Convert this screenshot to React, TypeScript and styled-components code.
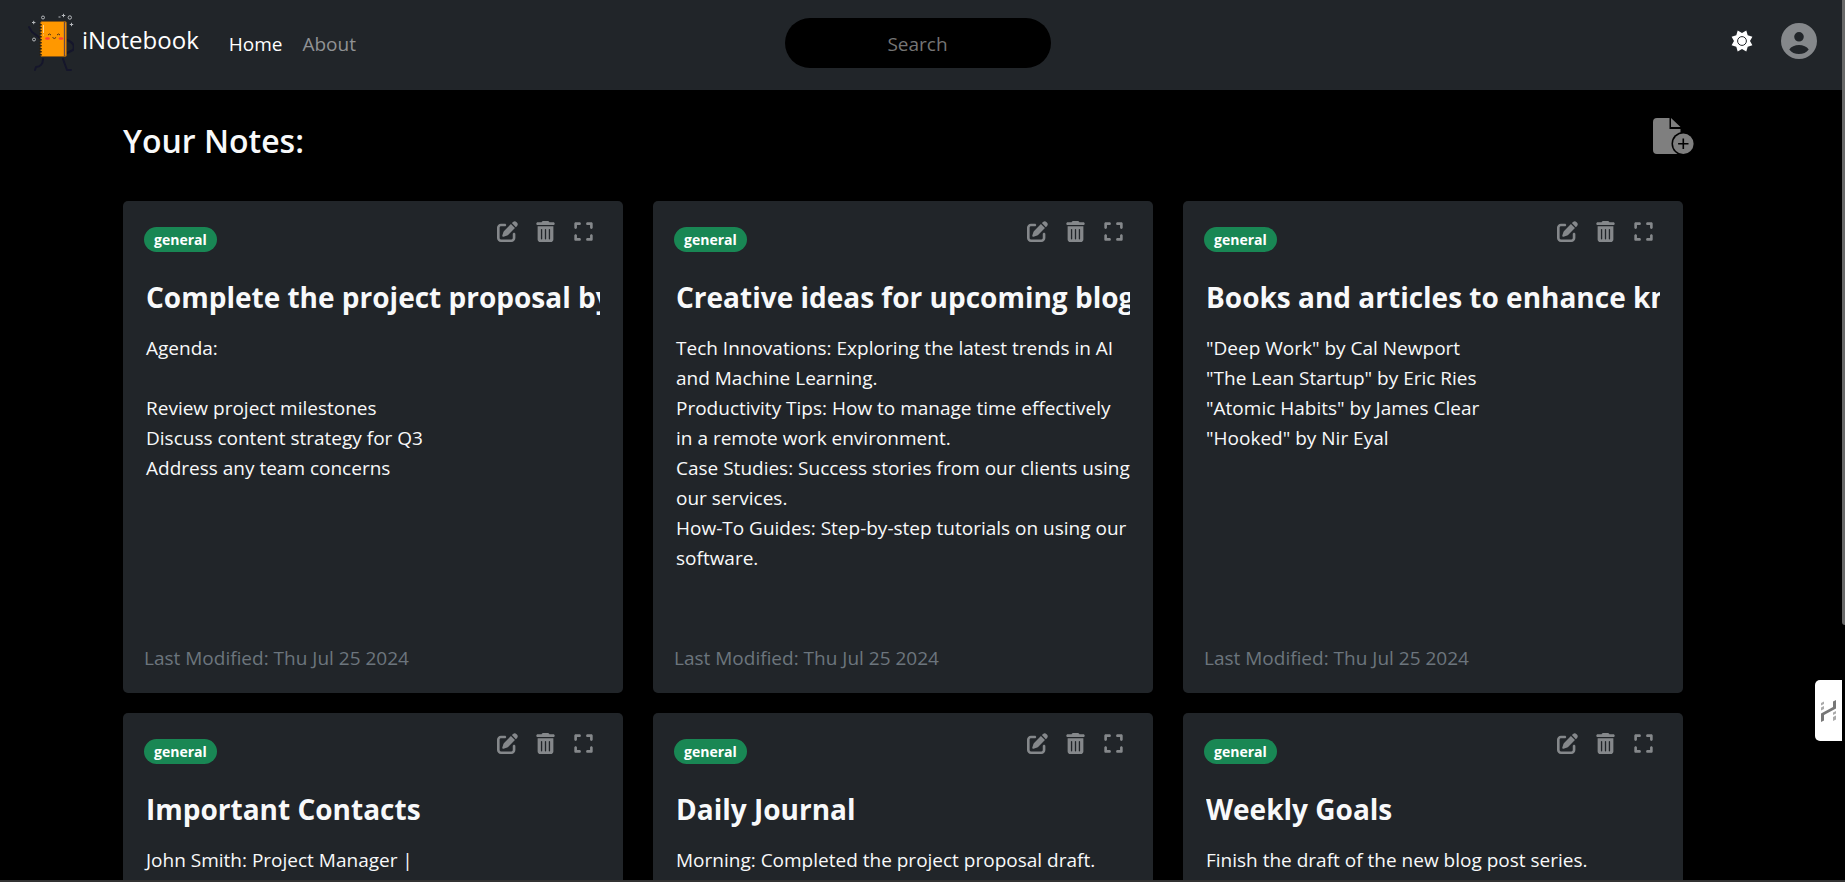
import React from "react";
import styled, { createGlobalStyle } from "styled-components";
import { FaPenToSquare, FaTrashCan, FaExpand } from "react-icons/fa6";

const colors = {
  page: "#000000",
  surface: "#212529",
  text: "#f8f9fa",
  muted: "#6c757d",
  icon: "#85888b",
  badge: "#198754",
};

const GlobalStyle = createGlobalStyle`
  *, *::before, *::after { box-sizing: border-box; }
  body {
    margin: 0;
    background: ${colors.page};
    color: ${colors.text};
    font-family: "Segoe UI", "Open Sans", "Noto Sans", sans-serif;
    font-size: 19px;
    line-height: 30px;
  }
  h1, h2, p { margin: 0; }
  button { border: 0; padding: 0; background: none; color: inherit; font: inherit; cursor: pointer; }
`;

const Window = styled.div`
  height: 100vh;
  display: grid;
  grid-template: minmax(0, 1fr) 2px / minmax(0, 1fr) 3px;
  overflow: hidden;
`;

const Page = styled.div`
  overflow: hidden;
`;

const ScrollTrack = styled.div`
  background: ${colors.page};
`;

const ScrollThumb = styled.div`
  height: 71%;
  background: #686868;
  border-radius: 0 0 0 3px;
`;

const BottomEdge = styled.div`
  grid-column: 1 / -1;
  background: #333333;
`;

const Navbar = styled.header`
  display: grid;
  grid-template-columns: 1fr 266px 1fr;
  align-items: center;
  height: 90px;
  padding: 0 25px 0 18px;
  background: ${colors.surface};
`;

const NavStart = styled.div`
  display: flex;
  align-items: center;
  padding-left: 8px;
`;

const Brand = styled.a`
  display: flex;
  align-items: center;
  gap: 8px;
  margin-right: 30px;
  padding-bottom: 6px;
  color: #ffffff;
  font-size: 24px;
  text-decoration: none;
`;

const BrandName = styled.span`
  padding-bottom: 4px;
`;

const NavLinks = styled.nav`
  display: flex;
  gap: 20px;
  padding-bottom: 2px;
`;

const NavLink = styled.a<{ $active?: boolean }>`
  color: ${(p) => (p.$active ? "#ffffff" : "#909294")};
  text-decoration: none;
`;

const SearchInput = styled.input`
  width: 100%;
  height: 50px;
  margin-bottom: 4px;
  padding: 2px 20px 0;
  border: 0;
  border-radius: 25px;
  background: #000000;
  color: ${colors.text};
  font: inherit;
  text-align: center;
  &::placeholder { color: #757575; opacity: 1; }
`;

const NavEnd = styled.div`
  display: flex;
  justify-content: flex-end;
  align-items: center;
  gap: 28px;
  padding-bottom: 8px;
`;

const IconButton = styled.button<{ $color?: string }>`
  display: flex;
  color: ${(p) => p.$color ?? colors.icon};
`;

const Main = styled.main`
  padding: 28px 159px 0 123px;
`;

const Heading = styled.div`
  display: flex;
  justify-content: space-between;
  align-items: flex-start;
  height: 83px;
  margin-right: -12px;
`;

const PageTitle = styled.h1`
  font-size: 32px;
  line-height: 46px;
  font-weight: 600;
`;

const NoteGrid = styled.section`
  display: grid;
  grid-template-columns: repeat(3, minmax(0, 1fr));
  gap: 20px 30px;
`;

const Card = styled.article`
  display: flex;
  flex-direction: column;
  height: 492px;
  padding: 20px 21px;
  border-radius: 5px;
  background: ${colors.surface};
`;

const CardTop = styled.div`
  display: flex;
  justify-content: space-between;
  align-items: flex-start;
`;

const Badge = styled.span`
  margin-top: 6px;
  padding: 0 10px;
  border-radius: 13px;
  background: ${colors.badge};
  color: #ffffff;
  font-size: 14px;
  line-height: 25px;
  font-weight: 700;
`;

const Actions = styled.div`
  display: flex;
  gap: 17px;
  padding-right: 8px;
`;

const CardBody = styled.div`
  flex: 1;
  padding: 26px 2px 0;
`;

const NoteTitle = styled.h2`
  overflow: hidden;
  white-space: nowrap;
  font-size: 28px;
  line-height: 38px;
  font-weight: 700;
`;

const NoteText = styled.p`
  margin-top: 17px;
  white-space: pre-line;
`;

const Modified = styled.footer`
  color: ${colors.muted};
`;

const SideTab = styled.button`
  position: fixed;
  right: 3px;
  top: 680px;
  display: flex;
  align-items: center;
  justify-content: center;
  width: 27px;
  height: 61px;
  border-radius: 5px 0 0 5px;
  background: #ffffff;
`;

const NotebookLogo = () => (
  <svg width="48" height="60" viewBox="0 0 48 60" fill="none" aria-hidden="true">
    <g stroke="#15162b" strokeWidth="2" strokeLinecap="round" strokeLinejoin="round">
      <path d="M3 15l3 5 8 6M41 28c6 2 8 6 6 10l-6 3M17 47c0 5-3 8-7 8l-1 3M37 47l4 11h4" />
    </g>
    <rect x="14.500" y="9.500" width="26" height="35" rx="1.500" fill="#ff9800" stroke="#8a5713" />
    <path d="M38.500 10v34" stroke="#664a48" strokeWidth="1.300" />
    <path d="M14.500 12v32" stroke="#2b2110" strokeWidth="2.500" strokeDasharray="1.500 1.500" />
    <path d="M17.500 13v8M17.500 22.500v1" stroke="#ffd28a" />
    <path d="M22 23q1.500-2 3 0M31 23q1.500-2 3 0M26.500 25.500q1.800 2 3.600 0" stroke="#49311c" />
    <ellipse cx="21.500" cy="26.500" rx="2.400" ry="1.300" fill="#ff4136" />
    <ellipse cx="35" cy="26.500" rx="2.400" ry="1.300" fill="#ff4136" />
    <g stroke="#b5b8bc">
      <circle cx="17" cy="5.500" r="1.500" />
      <circle cx="43.800" cy="5.500" r="1.700" />
      <circle cx="8" cy="27.500" r="1.500" />
      <path d="M6 10.500h3.400M7.700 8.800v3.400M43.800 12.500h3.400M45.500 10.800v3.400M35.800 3.500h3.400M37.500 1.800v3.400M32.500 5h2" />
    </g>
  </svg>
);

const SunIcon = () => (
  <svg width="22" height="22" viewBox="-11 -11 22 22" aria-hidden="true">
    <path fill="currentColor" d="M10.400 4.300L5.700 5.700 4.300 10.400 0 8-4.300 10.400-5.700 5.700-10.400 4.300-8 0-10.400-4.300-5.700-5.700-4.300-10.400 0-8 4.300-10.400 5.700-5.700 10.400-4.300 8 0z" />
    <circle r="4.400" fill="none" stroke={colors.surface} />
  </svg>
);

const AccountIcon = () => (
  <svg width="36" height="36" viewBox="0 0 36 36" aria-hidden="true">
    <path fill="currentColor" fillRule="evenodd" d="M18 0a18 18 0 100 36 18 18 0 000-36zm0 9a4.800 4.800 0 110 9.600A4.800 4.800 0 0118 9zm-9.700 17.500C10 23.500 14 22 18 22s8 1.500 9.700 4.500C25.500 29.500 22 31 18 31s-7.500-1.500-9.700-4.500z" />
  </svg>
);

const AddNoteIcon = () => (
  <svg width="42" height="36" viewBox="0 0 42 36" aria-hidden="true">
    <path fill="currentColor" d="M4 0h12.500v11H27.500V36H4a4 4 0 01-4-4V4a4 4 0 014-4zM18 0l9.500 9H18z" />
    <circle cx="30.300" cy="25.700" r="11.800" fill={colors.page} />
    <circle cx="30.300" cy="25.700" r="10.300" fill="currentColor" />
    <path d="M30.300 20.500v10.400M25.100 25.700h10.400" stroke={colors.page} strokeWidth="1.600" />
  </svg>
);

const TabLogo = () => (
  <svg width="15" height="22" viewBox="0 0 15 22" aria-hidden="true">
    <path fill="#777777" d="M0 22v-8.500L12 7V1.500L15 0v8.500L3 15v5.500z" />
    <path fill="#aaaaaa" d="M0 3l3-1.500V4L0 5.500zM0 7.500L3 6v3L0 10.500zM12 12.500l3-1.500v2.500L12 15zM12 17l3-1.500v4L12 21z" />
  </svg>
);

const notes = [
  { title: "Complete the project proposal by Friday", text: "Agenda:\n\nReview project milestones\nDiscuss content strategy for Q3\nAddress any team concerns" },
  { title: "Creative ideas for upcoming blog posts", text: "Tech Innovations: Exploring the latest trends in AI and Machine Learning.\nProductivity Tips: How to manage time effectively in a remote work environment.\nCase Studies: Success stories from our clients using our services.\nHow-To Guides: Step-by-step tutorials on using our software." },
  { title: "Books and articles to enhance knowledge", text: "\"Deep Work\" by Cal Newport\n\"The Lean Startup\" by Eric Ries\n\"Atomic Habits\" by James Clear\n\"Hooked\" by Nir Eyal" },
  { title: "Important Contacts", text: "John Smith: Project Manager |" },
  { title: "Daily Journal", text: "Morning: Completed the project proposal draft." },
  { title: "Weekly Goals", text: "Finish the draft of the new blog post series." },
];

export default function App() {
  return (
    <Window>
      <GlobalStyle />
      <Page>
        <Navbar>
          <NavStart>
            <Brand href="#"><NotebookLogo /><BrandName>iNotebook</BrandName></Brand>
            <NavLinks>
              <NavLink href="#" $active>Home</NavLink>
              <NavLink href="#about">About</NavLink>
            </NavLinks>
          </NavStart>
          <SearchInput type="text" placeholder="Search" aria-label="Search" />
          <NavEnd>
            <IconButton aria-label="Toggle theme" $color="#ffffff"><SunIcon /></IconButton>
            <IconButton aria-label="Account"><AccountIcon /></IconButton>
          </NavEnd>
        </Navbar>
        <Main>
          <Heading>
            <PageTitle>Your Notes:</PageTitle>
            <IconButton aria-label="Add note" $color="#7f7f7f"><AddNoteIcon /></IconButton>
          </Heading>
          <NoteGrid>
            {notes.map((note) => (
              <Card key={note.title}>
                <CardTop>
                  <Badge>general</Badge>
                  <Actions>
                    <IconButton aria-label="Edit note"><FaPenToSquare size={21} /></IconButton>
                    <IconButton aria-label="Delete note"><FaTrashCan size={21} /></IconButton>
                    <IconButton aria-label="Expand note"><FaExpand size={21} /></IconButton>
                  </Actions>
                </CardTop>
                <CardBody>
                  <NoteTitle>{note.title}</NoteTitle>
                  <NoteText>{note.text}</NoteText>
                </CardBody>
                <Modified>Last Modified: Thu Jul 25 2024</Modified>
              </Card>
            ))}
          </NoteGrid>
        </Main>
      </Page>
      <ScrollTrack><ScrollThumb /></ScrollTrack>
      <BottomEdge />
      <SideTab aria-label="Open side panel"><TabLogo /></SideTab>
    </Window>
  );
}
